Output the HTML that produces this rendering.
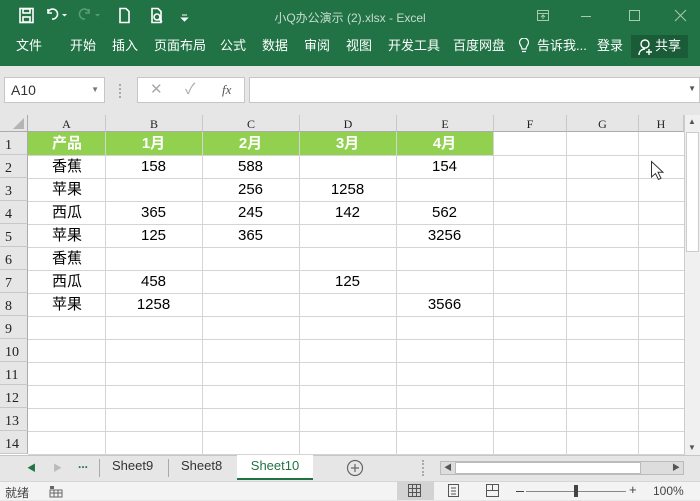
<!DOCTYPE html>
<html><head><meta charset="utf-8"><style>
*{margin:0;padding:0;box-sizing:border-box}
body{width:700px;height:500px;overflow:hidden;background:#e6e6e6;font-family:"Liberation Sans","Noto Sans CJK SC",sans-serif;position:relative}
.abs{position:absolute}
.top{left:0;top:0;width:700px;height:66px;background:#217346;color:#fff}
.tab{position:absolute;top:37px;font-size:13px;line-height:18px;color:#fff;white-space:nowrap}
.box{background:#fff;border:1px solid #c6c6c6}
.grid{position:absolute;left:0;top:115px;width:684px;height:340px;background:#fff}
.ch{position:absolute;top:0;height:17px;background:#e6e6e6;border-right:1px solid #c8c8c8;border-bottom:1px solid #ababab;font-family:"Liberation Serif","Noto Serif CJK SC",serif;font-size:12px;text-align:center;line-height:18px;color:#222}
.rh{position:absolute;left:0;width:28px;height:23px;background:#e6e6e6;border-bottom:1px solid #c8c8c8;border-right:1px solid #ababab;font-family:"Liberation Serif",serif;font-size:14px;line-height:28px;padding-left:5px;color:#222}
.vl{position:absolute;top:17px;width:1px;height:323px;background:#d4d4d4}
.hl{position:absolute;left:28px;width:656px;height:1px;background:#d4d4d4}
.c{position:absolute;height:23px;line-height:24px;font-size:15px;text-align:center;color:#000}
.h{color:#fff;font-weight:bold}
</style></head><body>
<div class="abs top">
  <svg class="abs" style="left:18px;top:7px" width="180" height="18" viewBox="0 0 180 18">
    <g fill="none" stroke="#fff" stroke-width="1.6">
      <rect x="2" y="1.5" width="13" height="14"/><rect x="5" y="2" width="7" height="4"/><rect x="5" y="10" width="7" height="5"/>
      <path d="M34 12 a5 5 0 1 0 -4 -7 M30 2 v4 h4"/>
      <path d="M67 12 a5 5 0 1 1 4 -7 M71 2 v4 h-4" stroke="#5a9c76"/>
      <path d="M102 1.5 h6 l3 3 v11 h-9z"/>
      <path d="M134 1.5 h6 l3 3 v11 h-9z"/><circle cx="139" cy="10" r="3"/><path d="M141 12 l3 3"/>
    </g>
    <path d="M44 7 l2.5 2.5 l2.5-2.5z" fill="#fff"/>
    <path d="M77 7 l2.5 2.5 l2.5-2.5z" fill="#5a9c76"/>
    <path d="M164 8 h5 M163.5 11 l3 3 l3-3z" stroke="#fff" fill="#fff"/>
  </svg>
  <div class="abs" style="left:0;width:700px;top:9px;text-align:center;font-size:12px;color:#c6dccd">小Q办公演示 (2).xlsx - Excel</div>
  <svg class="abs" style="left:535px;top:8px" width="160" height="16" viewBox="0 0 160 16" fill="none" stroke="#a8c9b4" stroke-width="1">
    <rect x="2.5" y="2.5" width="11" height="10"/><path d="M2.5 5.5 h11 M8 7 v4 M6 9 l2-2 l2 2"/>
    <path d="M46 8.5 h10"/><rect x="94.5" y="2.5" width="10" height="10"/><path d="M140 2 l11 11 M151 2 l-11 11"/>
  </svg>
  <div class="tab" style="left:16px">文件</div><div class="tab" style="left:70px">开始</div><div class="tab" style="left:112px">插入</div><div class="tab" style="left:154px">页面布局</div><div class="tab" style="left:220px">公式</div><div class="tab" style="left:262px">数据</div><div class="tab" style="left:304px">审阅</div><div class="tab" style="left:346px">视图</div><div class="tab" style="left:388px">开发工具</div><div class="tab" style="left:453px">百度网盘</div>
  <svg class="abs" style="left:519px;top:38px" width="10" height="16" viewBox="0 0 10 16" fill="none" stroke="#fff" stroke-width="1.2"><path d="M3 11 c0-3-2.5-4-2.5-6.5 a4.5 4.5 0 0 1 9 0 c0 2.5-2.5 3.5-2.5 6.5z M3 13.5 h4"/></svg>
  <div class="tab" style="left:537px">告诉我...</div><div class="tab" style="left:597px">登录</div>
  <div class="abs" style="left:631px;top:35px;width:57px;height:23px;background:#1a5c38"></div>
  <svg class="abs" style="left:638px;top:38px" width="16" height="18" viewBox="0 0 16 18" fill="none" stroke="#fff" stroke-width="1.4"><circle cx="7" cy="6" r="4"/><path d="M1 17 c0-4 3-6 6-6 M11 11 v6 M8 14 h6"/></svg>
  <div class="tab" style="left:655px">共享</div>
</div>
<div class="abs box" style="left:4px;top:77px;width:101px;height:26px;font-size:14px;line-height:24px;padding-left:6px;color:#333">A10<span style="position:absolute;right:5px;top:0;font-size:8px;color:#777">▼</span></div>
<div class="abs" style="left:119px;top:84px;width:2px;height:14px;border-left:2px dotted #aaa"></div>
<div class="abs box" style="left:137px;top:77px;width:108px;height:26px;color:#aaa;font-size:15px;line-height:24px"><span style="position:absolute;left:12px">✕</span><span style="position:absolute;left:47px">✓</span><span style="position:absolute;left:84px;color:#555;font-style:italic;font-family:'Liberation Serif',serif;font-size:13px">fx</span></div>
<div class="abs box" style="left:249px;top:77px;width:451px;height:26px"><span style="position:absolute;right:3px;top:6px;font-size:8px;color:#555">▼</span></div>

<div class="grid">
  <div class="ch" style="left:0;width:28px;border-right:1px solid #ababab"><svg width="14" height="14" style="position:absolute;left:12px;top:2px"><path d="M12 1 V12 H1z" fill="#b4b4b4"/></svg></div>
  <div class="ch" style="left:28px;width:78px">A</div><div class="ch" style="left:106px;width:97px">B</div><div class="ch" style="left:203px;width:97px">C</div><div class="ch" style="left:300px;width:97px">D</div><div class="ch" style="left:397px;width:97px">E</div><div class="ch" style="left:494px;width:73px">F</div><div class="ch" style="left:567px;width:72px">G</div><div class="ch" style="left:639px;width:45px">H</div>
  <div class="abs" style="left:28px;top:17px;width:466px;height:23px;background:#92d050"></div>
  <div class="vl" style="left:105px"></div><div class="vl" style="left:202px"></div><div class="vl" style="left:299px"></div><div class="vl" style="left:396px"></div><div class="vl" style="left:493px"></div><div class="vl" style="left:566px"></div><div class="vl" style="left:638px"></div>
  <div class="hl" style="top:40px"></div><div class="hl" style="top:63px"></div><div class="hl" style="top:86px"></div><div class="hl" style="top:109px"></div><div class="hl" style="top:132px"></div><div class="hl" style="top:155px"></div><div class="hl" style="top:178px"></div><div class="hl" style="top:201px"></div><div class="hl" style="top:224px"></div><div class="hl" style="top:247px"></div><div class="hl" style="top:270px"></div><div class="hl" style="top:293px"></div><div class="hl" style="top:316px"></div><div class="hl" style="top:339px"></div>
  <div class="rh" style="top:17px">1</div><div class="rh" style="top:40px">2</div><div class="rh" style="top:63px">3</div><div class="rh" style="top:86px">4</div><div class="rh" style="top:109px">5</div><div class="rh" style="top:132px">6</div><div class="rh" style="top:155px">7</div><div class="rh" style="top:178px">8</div><div class="rh" style="top:201px">9</div><div class="rh" style="top:224px">10</div><div class="rh" style="top:247px">11</div><div class="rh" style="top:270px">12</div><div class="rh" style="top:293px">13</div><div class="rh" style="top:316px">14</div>
  <div class="c h" style="left:28px;width:78px;top:17px">产品</div><div class="c h" style="left:105px;width:97px;top:17px">1月</div><div class="c h" style="left:202px;width:97px;top:17px">2月</div><div class="c h" style="left:299px;width:97px;top:17px">3月</div><div class="c h" style="left:396px;width:97px;top:17px">4月</div>
  <div class="c" style="left:28px;width:78px;top:40px">香蕉</div><div class="c" style="left:105px;width:97px;top:40px">158</div><div class="c" style="left:202px;width:97px;top:40px">588</div><div class="c" style="left:396px;width:97px;top:40px">154</div>
  <div class="c" style="left:28px;width:78px;top:63px">苹果</div><div class="c" style="left:202px;width:97px;top:63px">256</div><div class="c" style="left:299px;width:97px;top:63px">1258</div>
  <div class="c" style="left:28px;width:78px;top:86px">西瓜</div><div class="c" style="left:105px;width:97px;top:86px">365</div><div class="c" style="left:202px;width:97px;top:86px">245</div><div class="c" style="left:299px;width:97px;top:86px">142</div><div class="c" style="left:396px;width:97px;top:86px">562</div>
  <div class="c" style="left:28px;width:78px;top:109px">苹果</div><div class="c" style="left:105px;width:97px;top:109px">125</div><div class="c" style="left:202px;width:97px;top:109px">365</div><div class="c" style="left:396px;width:97px;top:109px">3256</div>
  <div class="c" style="left:28px;width:78px;top:132px">香蕉</div>
  <div class="c" style="left:28px;width:78px;top:155px">西瓜</div><div class="c" style="left:105px;width:97px;top:155px">458</div><div class="c" style="left:299px;width:97px;top:155px">125</div>
  <div class="c" style="left:28px;width:78px;top:178px">苹果</div><div class="c" style="left:105px;width:97px;top:178px">1258</div><div class="c" style="left:396px;width:97px;top:178px">3566</div>
  <svg class="abs" style="left:650px;top:45px" width="16" height="22" viewBox="0 0 16 22"><path d="M1.5 1.5 V17 l4-3.5 l3 6 l2.5-1.2 l-3-6 h5z" fill="#fff" stroke="#333" stroke-width="1"/></svg>
</div>
<div class="abs" style="left:684px;top:115px;width:16px;height:340px;background:#f0f0f0;border-left:1px solid #ccc"><div style="position:absolute;top:2px;left:3px;font-size:8px;color:#555">▲</div><div style="position:absolute;top:17px;left:1px;width:13px;height:120px;background:#fff;border:1px solid #ccc"></div><div style="position:absolute;top:328px;left:3px;font-size:8px;color:#555">▼</div></div>

<div class="abs" style="left:0;top:455px;width:700px;height:26px;background:#e6e6e6;border-top:1px solid #c6c6c6"></div>
<div class="abs" style="left:27px;top:461px;font-size:9px;color:#217346">◀</div>
<div class="abs" style="left:53px;top:461px;font-size:9px;color:#bbb">▶</div>
<div class="abs" style="left:78px;top:457px;font-size:12px;color:#217346;font-weight:bold">...</div>
<div class="abs" style="left:99px;top:459px;width:1px;height:18px;background:#aaa"></div>
<div class="abs" style="left:112px;top:458px;font-size:13px;color:#333">Sheet9</div>
<div class="abs" style="left:168px;top:459px;width:1px;height:18px;background:#aaa"></div>
<div class="abs" style="left:181px;top:458px;font-size:13px;color:#333">Sheet8</div>
<div class="abs" style="left:237px;top:455px;width:76px;height:25px;background:#fff;border-bottom:2px solid #217346;font-size:13px;color:#217346;text-align:center;line-height:22px">Sheet10</div>
<svg class="abs" style="left:346px;top:459px" width="18" height="18" viewBox="0 0 18 18" fill="none" stroke="#666" stroke-width="1.2"><circle cx="9" cy="9" r="7.5"/><path d="M9 5 v8 M5 9 h8"/></svg>
<div class="abs" style="left:422px;top:460px;width:2px;height:16px;border-left:2px dotted #aaa"></div>
<div class="abs" style="left:440px;top:461px;width:244px;height:14px;background:#ddd;border:1px solid #bbb"><div style="position:absolute;left:14px;top:0;width:186px;height:12px;background:#fff;border:1px solid #bbb"></div><span style="position:absolute;left:3px;top:0;font-size:8px;color:#555">◀</span><span style="position:absolute;right:3px;top:0;font-size:8px;color:#555">▶</span></div>

<div class="abs" style="left:0;top:481px;width:700px;height:19px;background:#f3f3f3;border-top:1px solid #d6d6d6"></div>
<div class="abs" style="left:5px;top:484px;font-size:12px;color:#444">就绪</div>
<svg class="abs" style="left:49px;top:485px" width="14" height="13" viewBox="0 0 14 13" fill="#666"><rect x="1" y="1" width="4" height="3"/><rect x="1" y="5" width="12" height="7" fill="none" stroke="#666"/><path d="M1 8h12M5 5v7M9 5v7" stroke="#666"/></svg>
<div class="abs" style="left:397px;top:481px;width:37px;height:19px;background:#d3d3d3"></div>
<svg class="abs" style="left:408px;top:484px" width="120" height="14" viewBox="0 0 120 14" fill="none" stroke="#555" stroke-width="1"><rect x="0.5" y="0.5" width="12" height="12"/><path d="M4.5 0v13M8.5 0v13M0 4.5h13M0 8.5h13"/><rect x="40.5" y="0.5" width="10" height="12"/><path d="M43 4h5M43 7h5M43 10h5"/><rect x="78.5" y="0.5" width="12" height="12"/><path d="M84.5 0.5v6M78.5 6.5h12"/></svg>
<div class="abs" style="left:516px;top:491px;width:8px;height:1px;background:#444"></div>
<div class="abs" style="left:526px;top:491px;width:100px;height:1px;background:#888"></div>
<div class="abs" style="left:574px;top:485px;width:4px;height:12px;background:#444"></div>
<div class="abs" style="left:629px;top:482px;font-size:13px;color:#444">+</div>
<div class="abs" style="left:653px;top:484px;font-size:12px;color:#444">100%</div>
</body></html>
